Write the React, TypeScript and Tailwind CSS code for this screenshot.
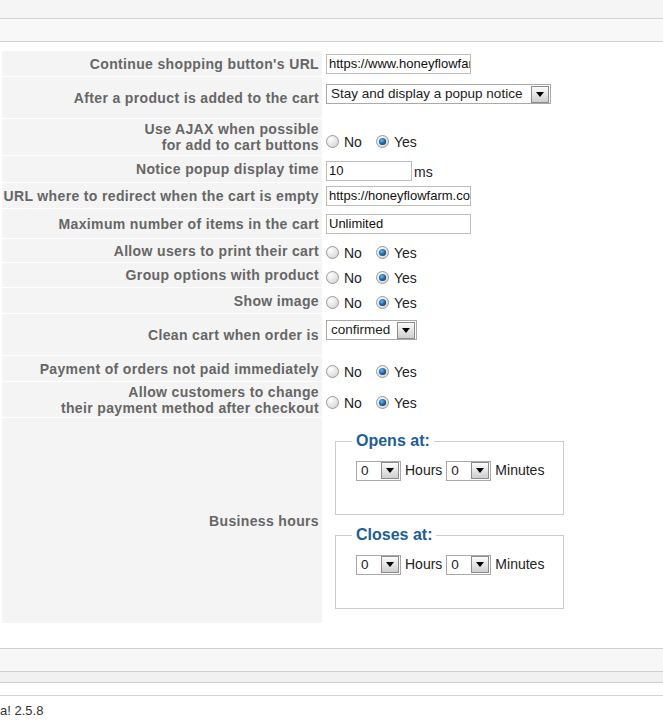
import type { ReactNode } from "react";

type Row = {
  label: ReactNode;
  height: string;
  value: ReactNode;
  valueClass?: string;
};

const Radio = ({ checked }: { checked?: boolean }) => (
  <svg width="13" height="13" viewBox="0 0 13 13" className="shrink-0">
    <defs>
      <radialGradient id="rb" cx="0.35" cy="0.3" r="0.8">
        <stop offset="0" stopColor="#ffffff" />
        <stop offset="1" stopColor="#d3d3d3" />
      </radialGradient>
      <radialGradient id="rd" cx="0.4" cy="0.35" r="0.7">
        <stop offset="0" stopColor="#6fb6ea" />
        <stop offset="0.6" stopColor="#1c69ab" />
        <stop offset="1" stopColor="#0d3f6e" />
      </radialGradient>
    </defs>
    <circle cx="6.5" cy="6.5" r="6" fill="url(#rb)" stroke="#9a9a9a" />
    {checked && <circle cx="6.5" cy="6.5" r="3.6" fill="url(#rd)" />}
  </svg>
);

const YesNo = () => (
  <div className="flex items-center text-[14px] text-[#222]">
    <Radio />
    <span className="ml-[5px] mr-[14px] mt-[2px]">No</span>
    <Radio checked />
    <span className="ml-[5px] mt-[2px]">Yes</span>
  </div>
);

const Arrow = () => (
  <span className="flex h-[17px] w-[18px] items-center justify-center border border-[#8c8c8c] bg-gradient-to-b from-[#fbfbfb] to-[#cfcfcf]">
    <svg width="8" height="5" viewBox="0 0 8 5">
      <path d="M0 0h8L4 5z" fill="#000" />
    </svg>
  </span>
);

const Select = ({ value, width }: { value: string; width: string }) => (
  <div
    className={`flex h-[20px] shrink-0 items-center justify-between border border-[#a9a9a9] bg-white pl-[4px] pr-px text-[13.5px] text-[#222] ${width}`}
  >
    <span className="leading-none">{value}</span>
    <Arrow />
  </div>
);

const TextBox = ({ value, width = "w-[145px]" }: { value: string; width?: string }) => (
  <div
    className={`flex h-[20px] items-center overflow-hidden whitespace-nowrap border border-[#bdbdbd] bg-white pl-[2px] text-[13px] text-[#111] ${width}`}
  >
    {value}
  </div>
);

const TimePicker = () => (
  <div className="flex items-center gap-[4px] text-[14px] text-[#222]">
    <Select value="0" width="w-[45px]" />
    <span>Hours</span>
    <Select value="0" width="w-[45px]" />
    <span>Minutes</span>
  </div>
);

const HoursBox = ({ title }: { title: string }) => (
  <fieldset className="ml-[9px] h-[83px] w-[229px] min-w-0 border border-[#cccccc] pl-[20px] pr-[4px]">
    <legend className="-ml-[4px] px-[4px] text-[16px] font-bold leading-[18px] text-[#1d5e94]">
      {title}
    </legend>
    <div className="mt-[10px]">
      <TimePicker />
    </div>
  </fieldset>
);

const rows: Row[] = [
  {
    label: "Continue shopping button's URL",
    height: "h-[25px]",
    value: <TextBox value="https://www.honeyflowfarm.com" />,
    valueClass: "pt-[3px]",
  },
  {
    label: "After a product is added to the cart",
    height: "h-[41px]",
    value: <Select value="Stay and display a popup notice" width="w-[225px]" />,
    valueClass: "items-start pt-[7px]",
  },
  {
    label: (
      <>
        Use AJAX when possible
        <br />
        for add to cart buttons
      </>
    ),
    height: "h-[36px]",
    value: <YesNo />,
    valueClass: "pt-[8px]",
  },
  {
    label: "Notice popup display time",
    height: "h-[26px]",
    value: (
      <div className="flex items-center text-[14px] text-[#222]">
        <TextBox value="10" width="w-[86px]" />
        <span className="ml-[2px] mt-[2px]">ms</span>
      </div>
    ),
    valueClass: "pt-[4px]",
  },
  {
    label: "URL where to redirect when the cart is empty",
    height: "h-[25px]",
    value: <TextBox value="https://honeyflowfarm.com/shop" />,
    valueClass: "pt-[3px]",
  },
  {
    label: "Maximum number of items in the cart",
    height: "h-[29px]",
    value: <TextBox value="Unlimited" />,
    valueClass: "pt-[5px]",
  },
  {
    label: "Allow users to print their cart",
    height: "h-[23px]",
    value: <YesNo />,
    valueClass: "pt-[4px]",
  },
  {
    label: "Group options with product",
    height: "h-[24px]",
    value: <YesNo />,
    valueClass: "pt-[4px]",
  },
  {
    label: "Show image",
    height: "h-[25px]",
    value: <YesNo />,
    valueClass: "pt-[4px]",
  },
  {
    label: "Clean cart when order is",
    height: "h-[41px]",
    value: <Select value="confirmed" width="w-[91px]" />,
    valueClass: "items-start pt-[6px]",
  },
  {
    label: "Payment of orders not paid immediately",
    height: "h-[25px]",
    value: <YesNo />,
    valueClass: "pt-[5px]",
  },
  {
    label: (
      <>
        Allow customers to change
        <br />
        their payment method after checkout
      </>
    ),
    height: "h-[35px]",
    value: <YesNo />,
    valueClass: "pt-[6px]",
  },
  {
    label: "Business hours",
    height: "h-[205px]",
    value: (
      <div className="flex flex-col gap-[11px]">
        <HoursBox title="Opens at:" />
        <HoursBox title="Closes at:" />
      </div>
    ),
    valueClass: "pt-[14px]",
  },
];

export default function App() {
  return (
    <div className="min-h-[723px] bg-white font-['Liberation_Sans',Arial,sans-serif]">
      {/* toolbar strips */}
      <div className="h-[19px] border-b border-[#d3d3d3] bg-[#f5f5f5]" />
      <div className="h-[23px] border-b border-[#d0d0d0] bg-[#f8f8f8]" />

      {/* cart settings */}
      <div className="ml-[2px] mt-[9px] flex flex-col gap-px">
        {rows.map((row, i) => (
          <div key={i} className={`flex ${row.height}`}>
            <div className="flex w-[320px] shrink-0 items-center justify-end bg-[#f4f4f4] pr-[3px] text-right text-[14px] font-bold leading-[16px] tracking-[0.35px] text-[#666666]">
              <span>{row.label}</span>
            </div>
            <div className={`flex pl-[4px] ${row.valueClass ?? "items-center"}`}>
              {row.value}
            </div>
          </div>
        ))}
      </div>

      {/* footer strips */}
      <div className="mt-[25px] h-[24px] border-y border-[#cfcfcf] bg-[#f7f7f7]" />
      <div className="h-[11px] border-b border-[#cfcfcf] bg-[#f1f1f1]" />
      <div className="h-[13px] border-b border-[#d3d3d3]" />
      <div className="pt-[7px] text-[13px] leading-[15px] text-[#333]">a! 2.5.8</div>
    </div>
  );
}
